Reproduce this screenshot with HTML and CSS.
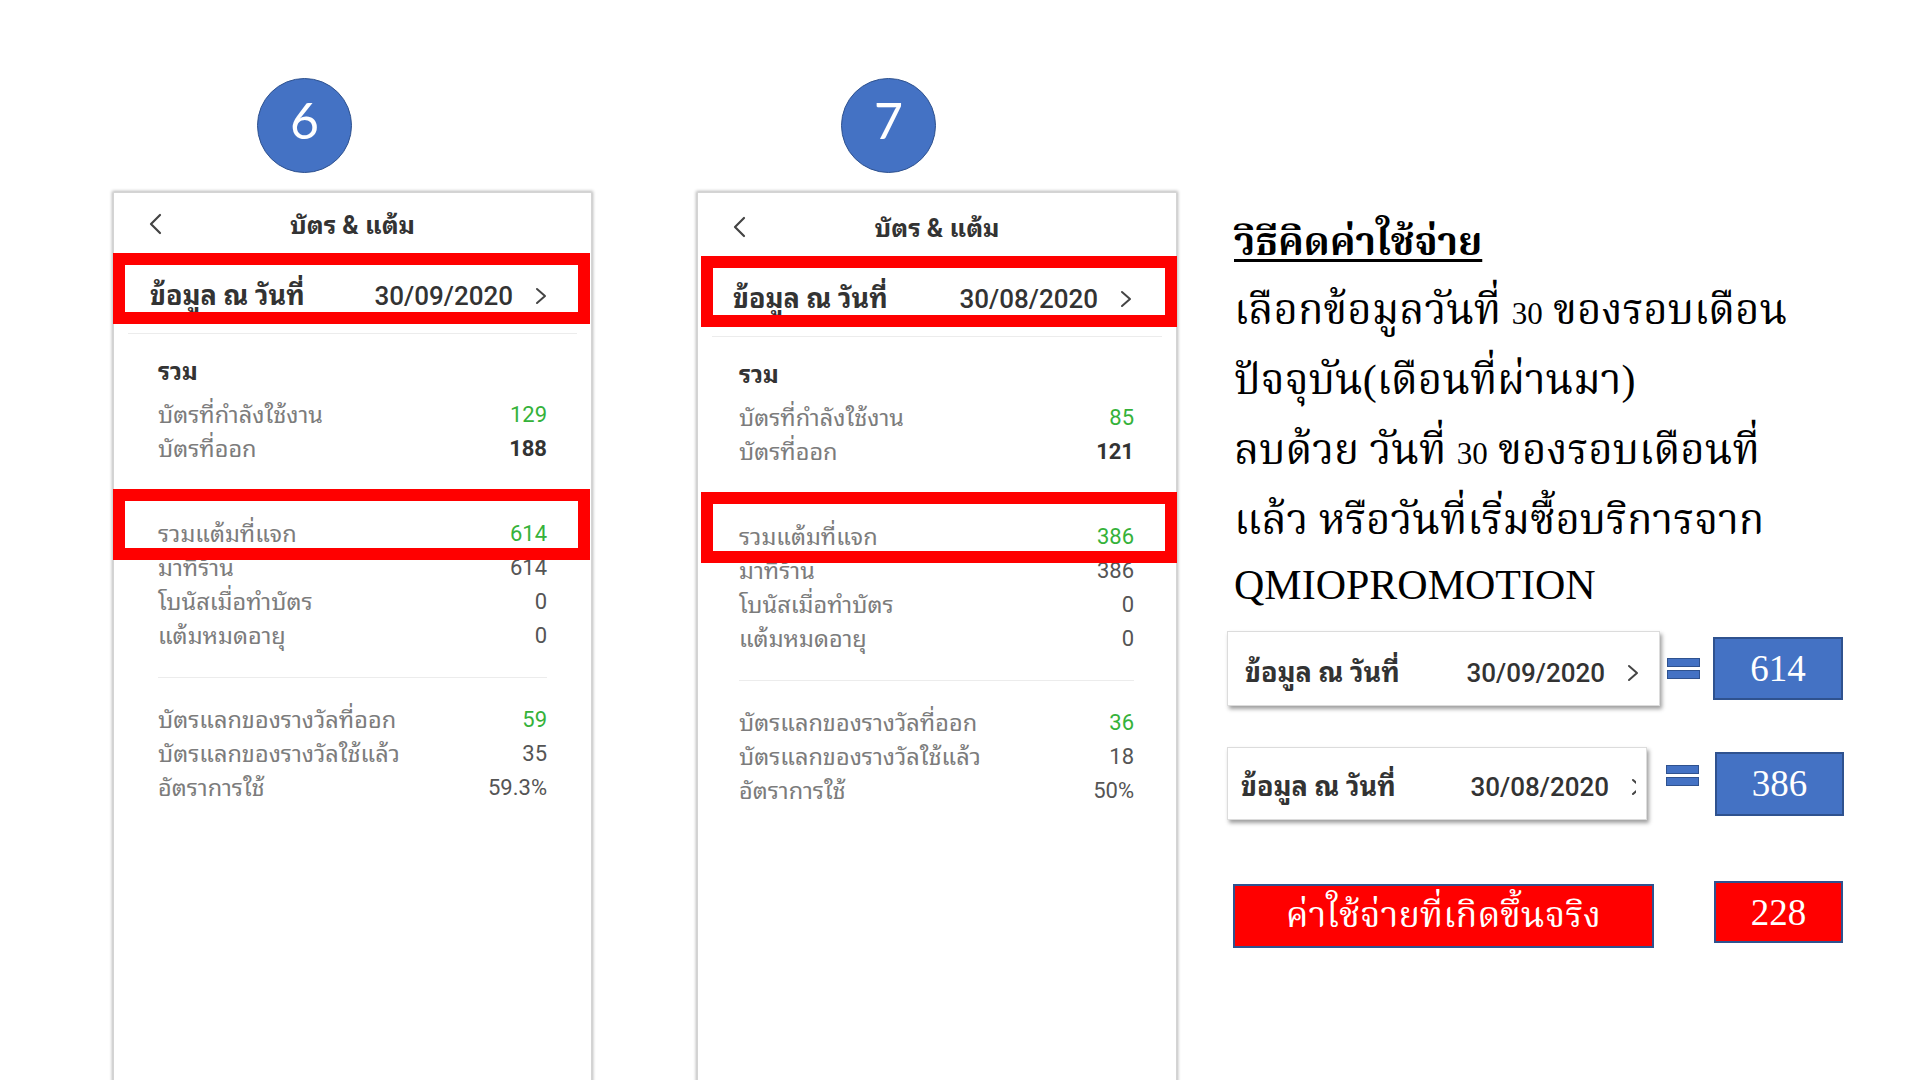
FILE: index.html
```html
<!DOCTYPE html>
<html lang="th">
<head>
<meta charset="utf-8">
<title>วิธีคิดค่าใช้จ่าย</title>
<link rel="stylesheet" href="styles.css">
</head>
<body>
<div class="slide">

  <section class="col-phone">
    <div class="badge">6</div>
    <div class="phone">
      <div class="topbar">
        <svg class="ic-back" viewBox="0 0 16 24" width="16" height="24"><path d="M13 3 L4 12 L13 21" fill="none" stroke="#444" stroke-width="2.2" stroke-linecap="round" stroke-linejoin="round"/></svg>
        <div class="title">บัตร &amp; แต้ม</div>
      </div>
      <div class="date-row mark mark-date">
        <span class="date-label">ข้อมูล ณ วันที่</span>
        <span class="date-val">30/09/2020</span>
        <svg class="ic-fwd" viewBox="0 0 12 18" width="12" height="18"><path d="M2 2 L10 9 L2 16" fill="none" stroke="#444" stroke-width="2" stroke-linecap="round" stroke-linejoin="round"/></svg>
      </div>
      <div class="sep"></div>
      <div class="group group-total">
        <div class="sec-title">รวม</div>
        <div class="row"><span class="lbl">บัตรที่กำลังใช้งาน</span><span class="num green">129</span></div>
        <div class="row"><span class="lbl">บัตรที่ออก</span><span class="num strong">188</span></div>
      </div>
      <div class="group group-points">
        <div class="row mark mark-row"><span class="lbl">รวมแต้มที่แจก</span><span class="num green">614</span></div>
        <div class="row"><span class="lbl">มาที่ร้าน</span><span class="num">614</span></div>
        <div class="row"><span class="lbl">โบนัสเมื่อทำบัตร</span><span class="num">0</span></div>
        <div class="row"><span class="lbl">แต้มหมดอายุ</span><span class="num">0</span></div>
      </div>
      <div class="sep sep-inner"></div>
      <div class="group group-reward">
        <div class="row"><span class="lbl">บัตรแลกของรางวัลที่ออก</span><span class="num green">59</span></div>
        <div class="row"><span class="lbl">บัตรแลกของรางวัลใช้แล้ว</span><span class="num">35</span></div>
        <div class="row"><span class="lbl">อัตราการใช้</span><span class="num">59.3%</span></div>
      </div>
    </div>
  </section>

  <section class="col-phone col-phone-b">
    <div class="badge">7</div>
    <div class="phone phone-b">
      <div class="topbar">
        <svg class="ic-back" viewBox="0 0 16 24" width="16" height="24"><path d="M13 3 L4 12 L13 21" fill="none" stroke="#444" stroke-width="2.2" stroke-linecap="round" stroke-linejoin="round"/></svg>
        <div class="title">บัตร &amp; แต้ม</div>
      </div>
      <div class="date-row mark mark-date">
        <span class="date-label">ข้อมูล ณ วันที่</span>
        <span class="date-val">30/08/2020</span>
        <svg class="ic-fwd" viewBox="0 0 12 18" width="12" height="18"><path d="M2 2 L10 9 L2 16" fill="none" stroke="#444" stroke-width="2" stroke-linecap="round" stroke-linejoin="round"/></svg>
      </div>
      <div class="sep"></div>
      <div class="group group-total">
        <div class="sec-title">รวม</div>
        <div class="row"><span class="lbl">บัตรที่กำลังใช้งาน</span><span class="num green">85</span></div>
        <div class="row"><span class="lbl">บัตรที่ออก</span><span class="num strong">121</span></div>
      </div>
      <div class="group group-points">
        <div class="row mark mark-row"><span class="lbl">รวมแต้มที่แจก</span><span class="num green">386</span></div>
        <div class="row"><span class="lbl">มาที่ร้าน</span><span class="num">386</span></div>
        <div class="row"><span class="lbl">โบนัสเมื่อทำบัตร</span><span class="num">0</span></div>
        <div class="row"><span class="lbl">แต้มหมดอายุ</span><span class="num">0</span></div>
      </div>
      <div class="sep sep-inner"></div>
      <div class="group group-reward">
        <div class="row"><span class="lbl">บัตรแลกของรางวัลที่ออก</span><span class="num green">36</span></div>
        <div class="row"><span class="lbl">บัตรแลกของรางวัลใช้แล้ว</span><span class="num">18</span></div>
        <div class="row"><span class="lbl">อัตราการใช้</span><span class="num">50%</span></div>
      </div>
    </div>
  </section>

  <section class="col-note">
    <div class="note">
      <div class="note-head">วิธีคิดค่าใช้จ่าย</div>
      <div class="note-line">เลือกข้อมูลวันที่ <span class="digits">30</span> ของรอบเดือน</div>
      <div class="note-line">ปัจจุบัน(เดือนที่ผ่านมา)</div>
      <div class="note-line">ลบด้วย วันที่ <span class="digits">30</span> ของรอบเดือนที่</div>
      <div class="note-line">แล้ว หรือวันที่เริ่มซื้อบริการจาก</div>
      <div class="note-line note-latin">QMIOPROMOTION</div>
    </div>

    <div class="calc calc-1">
      <div class="snap">
        <span class="date-label">ข้อมูล ณ วันที่</span>
        <span class="date-val">30/09/2020</span>
        <svg class="ic-fwd" viewBox="0 0 12 18" width="12" height="18"><path d="M2 2 L10 9 L2 16" fill="none" stroke="#444" stroke-width="2" stroke-linecap="round" stroke-linejoin="round"/></svg>
      </div>
      <div class="equals"><i></i><i></i></div>
      <div class="val val-blue">614</div>
    </div>

    <div class="calc calc-2">
      <div class="snap snap-2">
        <span class="date-label">ข้อมูล ณ วันที่</span>
        <span class="date-val">30/08/2020</span>
        <span class="fwd-cut"><svg class="ic-fwd" viewBox="0 0 12 18" width="12" height="18"><path d="M2 2 L10 9 L2 16" fill="none" stroke="#444" stroke-width="2" stroke-linecap="round" stroke-linejoin="round"/></svg></span>
      </div>
      <div class="equals"><i></i><i></i></div>
      <div class="val val-blue">386</div>
    </div>

    <div class="calc calc-3">
      <div class="result-label">ค่าใช้จ่ายที่เกิดขึ้นจริง</div>
      <div class="val val-red">228</div>
    </div>
  </section>

</div>
</body>
</html>
```

FILE: styles.css
```css
* { box-sizing: border-box; }

html, body {
  margin: 0;
  padding: 0;
  background: #ffffff;
}

body {
  width: 1920px;
  height: 1080px;
  overflow: hidden;
}

.slide {
  display: flex;
  align-items: flex-start;
  padding: 78px 0 0 113px;
  height: 1080px;
}

/* ---------- phone columns ---------- */
.col-phone {
  display: flex;
  flex-direction: column;
  width: 479px;
  flex: none;
}

.col-phone-b {
  width: 480px;
  margin-left: 105px;
}

.badge {
  width: 95px;
  height: 95px;
  margin-left: 144px;
  padding-bottom: 12px;
  border-radius: 50%;
  background: #4472c4;
  border: 1.5px solid #2f528f;
  color: #ffffff;
  font-family: Lato, "Open Sans", sans-serif;
  font-size: 50px;
  display: flex;
  align-items: center;
  justify-content: center;
}

.phone {
  margin-top: 19px;
  height: 920px;
  background: #ffffff;
  border: 1px solid #d4d4d4;
  box-shadow: 0 0 3px 1px rgba(0, 0, 0, 0.28);
  font-family: Roboto, "Noto Sans Thai Looped", "Noto Sans Thai", "Noto Sans Thai UI", Sarabun, Loma, Garuda, sans-serif;
  color: #333333;
}

.phone-b {
  padding-top: 3px;
}

.topbar {
  height: 65px;
  display: grid;
  grid-template-columns: 1fr auto 1fr;
  align-items: center;
}

.ic-back {
  justify-self: start;
  margin-left: 33px;
  margin-top: -4px;
}

.title {
  font-size: 25px;
  font-weight: 700;
  line-height: 30px;
  color: #333333;
}

.date-row {
  height: 75px;
  display: flex;
  align-items: center;
  padding: 0 44px 0 36px;
}

.phone-b .date-row {
  padding-left: 35px;
}

.date-label {
  font-size: 27px;
  font-weight: 700;
  line-height: 30px;
  color: #333333;
}

.date-val {
  margin-left: auto;
  font-size: 26px;
  font-weight: 500;
  line-height: 30px;
  color: #333333;
}

.ic-fwd {
  margin-left: 22px;
  flex: none;
}

/* red annotation boxes drawn over the screenshot */
.mark {
  position: relative;
}

.mark::after {
  content: "";
  position: absolute;
  border: 12px solid #ff0000;
  pointer-events: none;
}

.mark-date::after {
  top: -5px;
  bottom: 9px;
  left: -1px;
  right: 1px;
}

.phone-b .mark-date::after {
  left: 3px;
  right: -1px;
}

.mark-row::after {
  top: -28px;
  bottom: -9px;
  left: -45px;
  right: -43px;
}

.phone-b .mark-row::after {
  left: -38px;
  right: -43px;
}

.sep {
  height: 1px;
  background: #ececec;
  margin: 0 14px;
}

.sep-inner {
  margin: 24px 44px 25px;
}

.phone-b .sep-inner {
  margin-left: 41px;
  margin-right: 42px;
}

.group {
  padding-left: 44px;
  padding-right: 44px;
}

.phone-b .group {
  padding-left: 41px;
  padding-right: 42px;
}

.group-total {
  padding-top: 21px;
}

.group-points {
  margin-top: 51px;
}

.sec-title {
  font-size: 24px;
  font-weight: 700;
  line-height: 34px;
  color: #333333;
  margin-bottom: 9px;
}

.row {
  display: flex;
  justify-content: space-between;
  font-size: 23.5px;
  line-height: 34px;
  height: 34px;
}

.lbl {
  color: #7c7c7c;
}

.num {
  font-size: 22px;
  color: #555555;
}

.num.green {
  color: #35b23a;
}

.num.strong {
  font-weight: 700;
  color: #333333;
}

/* ---------- explanation column ---------- */
.col-note {
  margin-left: 50px;
  padding-top: 130px;
  display: flex;
  flex-direction: column;
  flex: none;
  width: 640px;
}

.note {
  padding-left: 7px;
  font-family: "Liberation Serif", "Noto Serif Thai", "Noto Sans Thai Looped", "Noto Sans Thai", Norasi, Kinnari, Laksaman, serif;
  color: #000000;
  white-space: nowrap;
}

.note-head {
  font-size: 39px;
  font-weight: 700;
  line-height: 67px;
  text-decoration: underline;
  text-decoration-thickness: 3px;
  text-underline-offset: 4px;
}

.note-line {
  font-size: 42px;
  line-height: 70px;
}

.digits {
  font-size: 31px;
  line-height: 1;
}

.note-latin {
  font-size: 42px;
  line-height: 60px;
}

.calc {
  display: flex;
  align-items: center;
}

.calc-1 {
  margin-top: 16px;
}

.calc-2 {
  margin-top: 41px;
}

.calc-3 {
  margin-top: 61px;
  align-items: flex-start;
}

.snap {
  width: 433px;
  height: 75px;
  display: flex;
  align-items: center;
  padding: 8px 20px 0 17px;
  background: #ffffff;
  border: 1px solid #dcdcdc;
  box-shadow: 2px 3px 4px rgba(0, 0, 0, 0.38);
  font-family: Roboto, "Noto Sans Thai Looped", "Noto Sans Thai", "Noto Sans Thai UI", Sarabun, Loma, Garuda, sans-serif;
}

.snap-2 {
  width: 420px;
  height: 73px;
  padding: 6px 10px 0 13px;
}

.fwd-cut {
  display: block;
  width: 27px;
  height: 18px;
  overflow: hidden;
  flex: none;
}

.equals {
  display: flex;
  flex-direction: column;
  gap: 3px;
  margin-left: 7px;
}

.equals i {
  display: block;
  width: 33px;
  height: 9px;
  background: #4472c4;
  border: 1px solid #2f528f;
}

.calc-2 .equals {
  margin-left: 19px;
  margin-bottom: 16px;
}

.val {
  display: flex;
  align-items: center;
  justify-content: center;
  color: #ffffff;
  font-family: "Liberation Serif", serif;
  font-size: 37px;
}

.val-blue {
  width: 130px;
  height: 63px;
  margin-left: 13px;
  background: #4472c4;
  border: 2px solid #2f528f;
}

.calc-2 .val-blue {
  width: 129px;
  height: 64px;
  margin-left: 16px;
}

.result-label {
  width: 421px;
  height: 64px;
  margin-left: 6px;
  margin-top: 3px;
  background: #ff0000;
  border: 2px solid #2f528f;
  color: #ffffff;
  font-family: "Liberation Serif", "Noto Serif Thai", "Noto Sans Thai Looped", "Noto Sans Thai", Norasi, Kinnari, Laksaman, serif;
  font-size: 36px;
  line-height: 58px;
  text-align: center;
  white-space: nowrap;
}

.val-red {
  width: 129px;
  height: 62px;
  margin-left: 60px;
  background: #ff0000;
  border: 2px solid #2f528f;
}
```
